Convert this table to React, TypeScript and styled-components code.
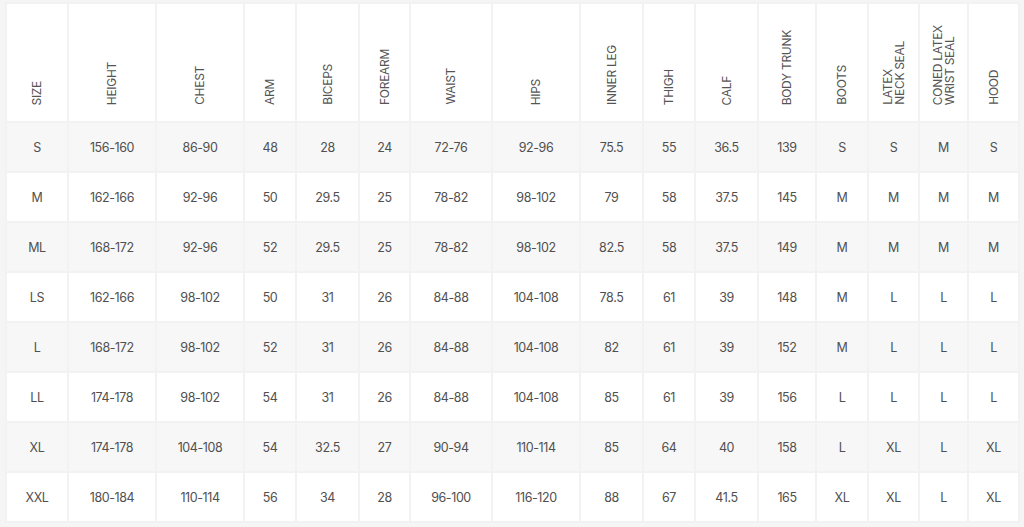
import React from "react";
import styled, { createGlobalStyle } from "styled-components";

const GlobalStyle = createGlobalStyle`
  html, body {
    margin: 0;
    padding: 0;
    background: #f5f5f5;
  }
  body {
    font-family: Inter, "Liberation Sans", sans-serif;
  }
`;

const Page = styled.div`
  width: 1024px;
  height: 527px;
  padding: 2px 5px;
  box-sizing: border-box;
  background: #f5f5f5;
`;

const Table = styled.table`
  width: 1014px;
  table-layout: fixed;
  border-collapse: separate;
  border-spacing: 2px;
  background: #f2f2f2;
`;

const HeadCell = styled.th<{ $w: number }>`
  width: ${(p) => p.$w}px;
  height: 117px;
  box-sizing: border-box;
  padding: 0 0 16px;
  background: #ffffff;
  vertical-align: bottom;
  text-align: center;
  font-weight: 400;
  line-height: 0;
`;

const VerticalLabel = styled.span`
  display: inline-block;
  vertical-align: bottom;
  writing-mode: vertical-rl;
  transform: rotate(180deg);
  text-align: left;
  font-size: 12px;
  line-height: 11.5px;
  color: #555555;
  letter-spacing: -0.3px;
  white-space: pre;
`;

const Row = styled.tr<{ $shade: boolean }>`
  background: ${(p) => (p.$shade ? "#f7f7f7" : "#ffffff")};
`;

const Cell = styled.td`
  height: 48px;
  padding: 0;
  text-align: center;
  vertical-align: middle;
  font-size: 12.5px;
  color: #505050;
  letter-spacing: -0.4px;
`;

const columns: { label: string; w: number }[] = [
  { label: "SIZE", w: 60 },
  { label: "HEIGHT", w: 86 },
  { label: "CHEST", w: 86 },
  { label: "ARM", w: 50 },
  { label: "BICEPS", w: 61 },
  { label: "FOREARM", w: 49 },
  { label: "WAIST", w: 80 },
  { label: "HIPS", w: 86 },
  { label: "INNER LEG", w: 61 },
  { label: "THIGH", w: 50 },
  { label: "CALF", w: 61 },
  { label: "BODY TRUNK", w: 56 },
  { label: "BOOTS", w: 50 },
  { label: "LATEX\nNECK SEAL", w: 49 },
  { label: "CONED LATEX\nWRIST SEAL", w: 47 },
  { label: "HOOD", w: 49 },
];

const rows: string[][] = [
  ["S", "156-160", "86-90", "48", "28", "24", "72-76", "92-96", "75.5", "55", "36.5", "139", "S", "S", "M", "S"],
  ["M", "162-166", "92-96", "50", "29.5", "25", "78-82", "98-102", "79", "58", "37.5", "145", "M", "M", "M", "M"],
  ["ML", "168-172", "92-96", "52", "29.5", "25", "78-82", "98-102", "82.5", "58", "37.5", "149", "M", "M", "M", "M"],
  ["LS", "162-166", "98-102", "50", "31", "26", "84-88", "104-108", "78.5", "61", "39", "148", "M", "L", "L", "L"],
  ["L", "168-172", "98-102", "52", "31", "26", "84-88", "104-108", "82", "61", "39", "152", "M", "L", "L", "L"],
  ["LL", "174-178", "98-102", "54", "31", "26", "84-88", "104-108", "85", "61", "39", "156", "L", "L", "L", "L"],
  ["XL", "174-178", "104-108", "54", "32.5", "27", "90-94", "110-114", "85", "64", "40", "158", "L", "XL", "L", "XL"],
  ["XXL", "180-184", "110-114", "56", "34", "28", "96-100", "116-120", "88", "67", "41.5", "165", "XL", "XL", "L", "XL"],
];

const App = () => {
  return (
    <>
      <GlobalStyle />
      <Page>
        <Table>
          <thead>
            <tr>
              {columns.map((c) => (
                <HeadCell key={c.label} $w={c.w}>
                  <VerticalLabel>{c.label}</VerticalLabel>
                </HeadCell>
              ))}
            </tr>
          </thead>
          <tbody>
            {rows.map((r, i) => (
              <Row key={r[0]} $shade={i % 2 === 0}>
                {r.map((v, j) => (
                  <Cell key={j}>{v}</Cell>
                ))}
              </Row>
            ))}
          </tbody>
        </Table>
      </Page>
    </>
  );
};

export default App;
